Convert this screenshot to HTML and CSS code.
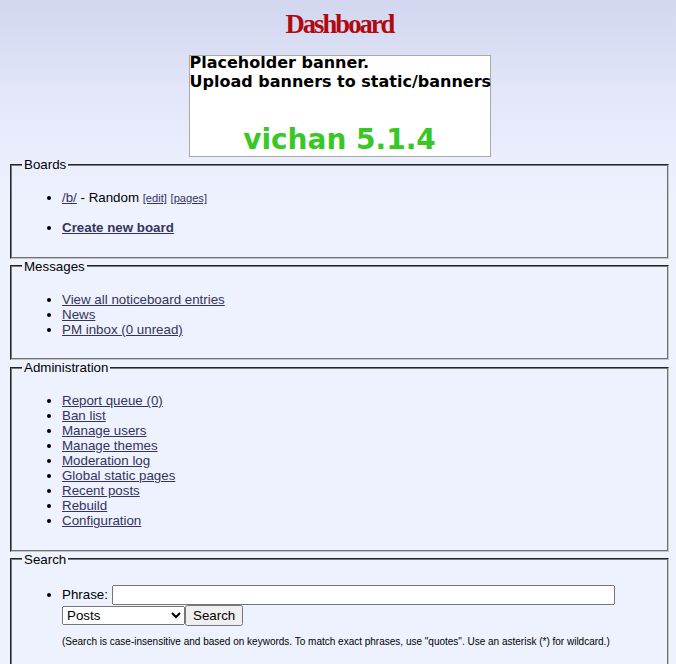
FILE: index.html
```html
<!DOCTYPE html>
<html lang="en">
<head>
<meta charset="utf-8">
<title>Dashboard</title>
<link rel="stylesheet" href="styles.css">
</head>
<body>
<header class="page-header">
  <h1 class="title">Dashboard</h1>
</header>
<div class="banner">
  <div class="banner-line">Placeholder banner.</div>
  <div class="banner-line banner-line-second">Upload banners to static/banners</div>
  <div class="banner-version">vichan 5.1.4</div>
</div>

<fieldset class="box">
  <legend class="box-legend">Boards</legend>
  <ul class="box-list">
    <li><a class="link" href="#">/b/</a> - Random <a class="link" href="#"><small class="small">[edit]</small></a> <a class="link" href="#"><small class="small">[pages]</small></a></li>
    <li class="spaced"><a class="link" href="#"><strong>Create new board</strong></a></li>
  </ul>
</fieldset>

<fieldset class="box">
  <legend class="box-legend">Messages</legend>
  <ul class="box-list">
    <li><a class="link" href="#">View all noticeboard entries</a></li>
    <li><a class="link" href="#">News</a></li>
    <li><a class="link" href="#">PM inbox (0 unread)</a></li>
  </ul>
</fieldset>

<fieldset class="box">
  <legend class="box-legend">Administration</legend>
  <ul class="box-list">
    <li><a class="link" href="#">Report queue (0)</a></li>
    <li><a class="link" href="#">Ban list</a></li>
    <li><a class="link" href="#">Manage users</a></li>
    <li><a class="link" href="#">Manage themes</a></li>
    <li><a class="link" href="#">Moderation log</a></li>
    <li><a class="link" href="#">Global static pages</a></li>
    <li><a class="link" href="#">Recent posts</a></li>
    <li><a class="link" href="#">Rebuild</a></li>
    <li><a class="link" href="#">Configuration</a></li>
  </ul>
</fieldset>

<fieldset class="box">
  <legend class="box-legend">Search</legend>
  <ul class="box-list">
    <li>
      <form class="search-form" action="#" method="post">
        <label class="search-label" for="search">Phrase:</label>
        <input class="search-input" id="search" type="text" value="">
        <select class="search-select">
          <option>Posts</option>
          <option>IP address notes</option>
          <option>Bans</option>
          <option>Moderation log</option>
        </select><input class="search-button" type="submit" value="Search">
      </form>
      <p class="unimportant">(Search is case-insensitive and based on keywords. To match exact phrases, use "quotes". Use an asterisk (*) for wildcard.)</p>
    </li>
  </ul>
</fieldset>
</body>
</html>
```
FILE: styles.css
```css
html {
  background: #eef2ff;
}
body {
  margin: 0;
  padding: 0 5px 0 8px;
  min-height: 664px;
  background: linear-gradient(to bottom, #d2d6ef 0px, #e2e6f8 90px, #eef2ff 200px) no-repeat #eef2ff;
  color: #000;
  font-family: "Liberation Sans", Arial, sans-serif;
  font-size: 10pt;
}
.page-header {
  padding-top: 9px;
}
.title {
  margin: 0;
  color: #af0a0f;
  text-align: center;
  font-family: "Liberation Serif", "Times New Roman", serif;
  font-size: 20pt;
  font-weight: bold;
  letter-spacing: -2px;
}
.banner {
  box-sizing: content-box;
  width: 300px;
  height: 100px;
  margin: 15px auto 0;
  border: 1px solid #a9a9a9;
  background: #fff;
  font-family: "DejaVu Sans", Verdana, sans-serif;
  font-weight: bold;
}
.banner-line {
  font-size: 16px;
  line-height: 13px;
  color: #000;
  white-space: nowrap;
}
.banner-line-second {
  margin-top: 6px;
}
.banner-version {
  margin-top: 38px;
  text-align: center;
  font-size: 28px;
  line-height: 28px;
  color: #38c826;
}
.box {
  margin: 0 2px;
  border: 2px groove #c0c0c0;
  border-color: #7a7a7a #c4c4c4 #c4c4c4 #7a7a7a;
  padding: 0.35em 0.75em 0.625em;
}
.box-legend {
  padding: 0 2px;
}
.box-list {
  margin: 1em 0;
  padding-left: 40px;
}
.spaced {
  margin-top: 15px;
}
.link {
  color: #34345c;
}
.small {
  font-size: smaller;
}
.search-form {
  display: inline;
}
.search-label {
  display: inline;
}
.search-input {
  width: 503px;
  height: 20px;
  box-sizing: border-box;
  font-family: "Liberation Sans", Arial, sans-serif;
  font-size: 13.33px;
  vertical-align: baseline;
}
.search-select {
  width: 123px;
  height: 19px;
  box-sizing: border-box;
  font-family: "Liberation Sans", Arial, sans-serif;
  font-size: 13.33px;
}
.search-button {
  height: 21px;
  box-sizing: border-box;
  font-family: "Liberation Sans", Arial, sans-serif;
  font-size: 13.33px;
}
.unimportant {
  margin: 10px 0;
  font-size: 10px;
}
```
